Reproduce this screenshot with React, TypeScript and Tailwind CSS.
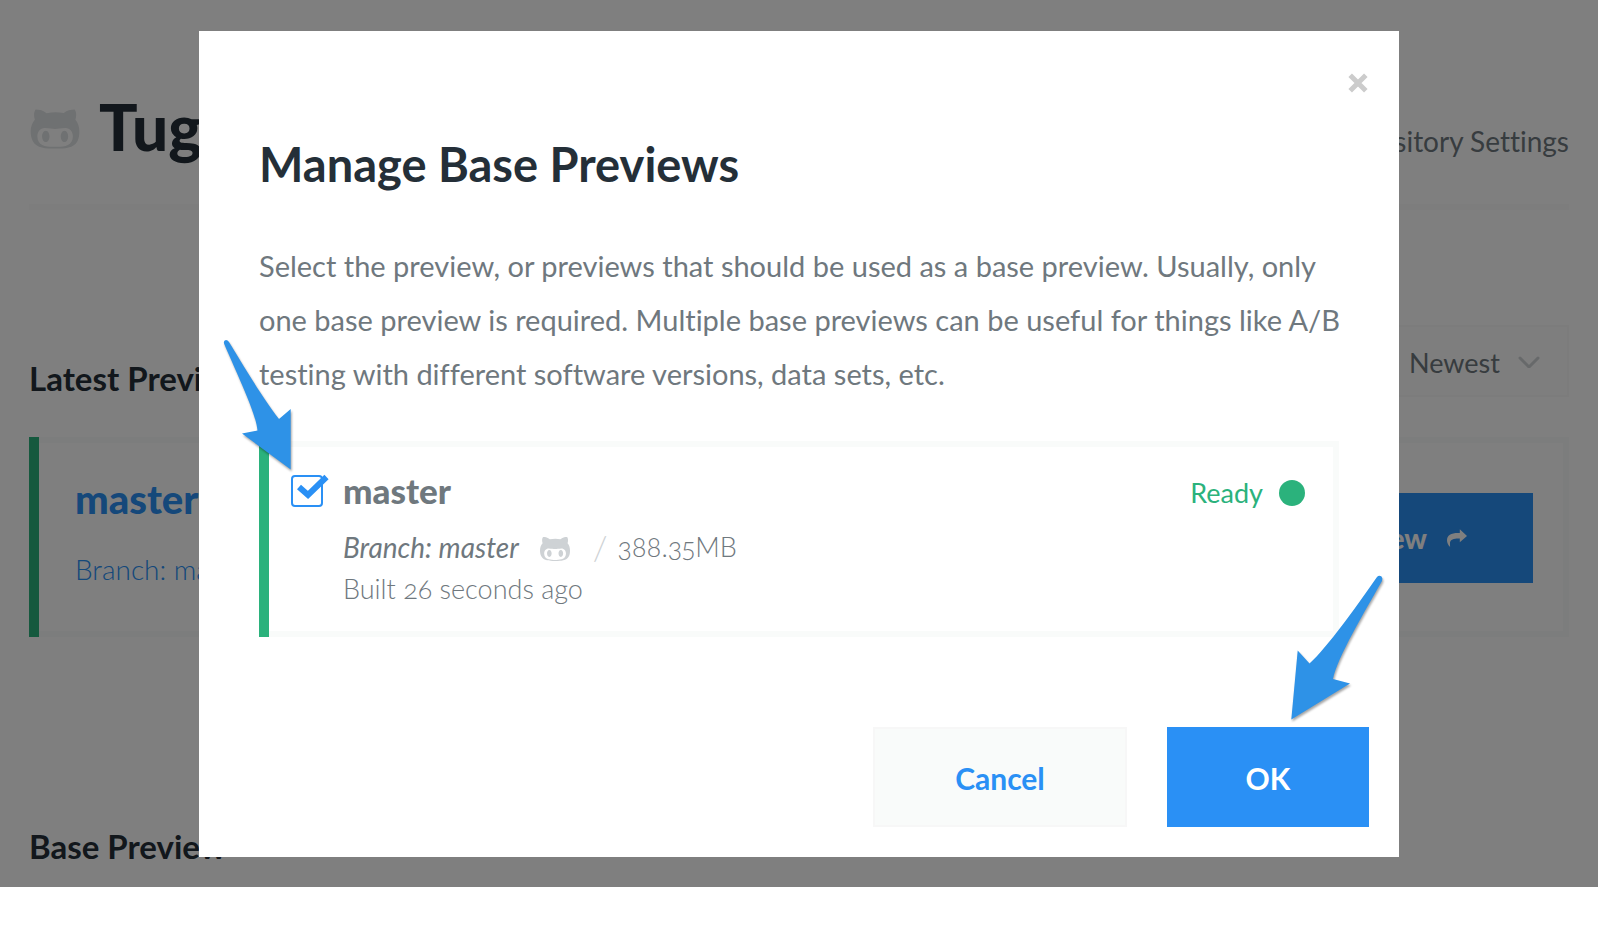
import type { ReactNode } from "react";
import { FaGithubAlt } from "react-icons/fa";

function Card({ className, children }: { className: string; children: ReactNode }) {
  return (
    <section className={`border-l-10 border-[#2bb27c] ${className}`}>
      <div className="border-6 border-l-0 border-[#f9fbfa]">{children}</div>
    </section>
  );
}

function CloseIcon() {
  return (
    <svg viewBox="0 0 20 20" className="size-5" fill="none" stroke="#cccccc" strokeWidth="5" aria-hidden="true">
      <path d="M2.2 2.2 17.8 17.8M17.8 2.2 2.2 17.8" />
    </svg>
  );
}

function ShareIcon() {
  return (
    <svg viewBox="0 0 20 18" className="h-[18px] w-5" fill="#ffffff" aria-hidden="true">
      <path d="M12.8 0.3 20 7 12.8 13.2V9.4C7 9.2 3.4 10.4 3 13.6 2.9 15.2 3.1 16.6 3.1 17.9 1 16 0 13.4 0 11.2 0 6 4.6 3.6 12.8 4Z" />
    </svg>
  );
}

function ChevronIcon() {
  return (
    <svg
      viewBox="0 0 22 14"
      className="pointer-events-none absolute top-1/2 right-[29px] h-3.5 w-[22px] -translate-y-1/2"
      fill="none"
      stroke="#ced2d5"
      strokeWidth="3"
      strokeLinecap="round"
      strokeLinejoin="round"
      aria-hidden="true"
    >
      <path d="M2 4 11 13 20 4" />
    </svg>
  );
}

function Page() {
  return (
    <div className="px-[29px] pb-[19px]">
      <header className="flex items-end justify-between border-b-6 border-[#fafbfb] pt-[85px] pb-[35px]">
        <div className="flex items-center gap-[18px]">
          <FaGithubAlt className="mt-1 size-[52px] text-[#dfe2e4]" aria-hidden="true" />
          <h1 className="text-[64px] leading-[84px] font-black">Tugboat</h1>
        </div>
        <a href="#settings" className="pb-[7px] text-[28px] leading-[42px] text-[#6f787e]">
          Repository Settings
        </a>
      </header>

      <div className="mt-[115px] flex items-end justify-between">
        <h2 className="text-[33px] leading-[38px] font-bold">Latest Previews</h2>
        <div className="relative">
          <label htmlFor="sort" className="sr-only">
            Sort previews
          </label>
          <select
            id="sort"
            className="h-[72px] w-[200px] appearance-none border-2 border-[#f9f9f9] bg-[#fdfdfd] pt-1 pl-[38px] text-[27px] text-[#6f787e]"
          >
            <option>Newest</option>
          </select>
          <ChevronIcon />
        </div>
      </div>

      <Card className="mt-10">
        <div className="flex items-center justify-between pt-[34px] pr-[30px] pb-8 pl-9">
          <div className="pb-2">
            <h3 className="text-[40px] leading-[44px] font-black text-[#2a90f5]">master</h3>
            <p className="mt-[26px] text-[28px] leading-[44px] font-light text-[#2a90f5]">Branch: master</p>
          </div>
          <button className="flex h-[90px] items-center gap-5 bg-[#2a90f5] pr-[66px] pl-16 text-[28px] font-black text-white">
            Preview
            <ShareIcon />
          </button>
        </div>
      </Card>

      <h2 className="mt-[187px] text-[33px] leading-[44px] font-bold">Base Preview</h2>
    </div>
  );
}

function Arrows() {
  return (
    <svg
      viewBox="0 0 1200 826"
      className="pointer-events-none absolute top-0 left-0 h-[826px] w-[1200px] overflow-visible drop-shadow-[1px_2px_1px_rgba(0,0,0,0.35)]"
      fill="#2e92e7"
      aria-hidden="true"
    >
      <path d="M25.2 313Q24 309.5 27 309Q28.7 309 30 311C47 339 65 369 80 388L91.7 378V438.5L43 402.5L58.5 399.5C57 382 38 343 25.2 313Z" />
      <path d="M1178 546Q1180 544 1182.5 545.5Q1184 547 1183 550C1166 580 1138 627 1134 648L1151 652.5L1092.3 688.5L1098.7 619.5L1110.5 632.5C1128 617 1160 572 1178 546Z" />
    </svg>
  );
}

function Dialog() {
  return (
    <div
      role="dialog"
      aria-modal="true"
      aria-labelledby="dialog-title"
      className="relative w-full max-w-[1200px] bg-white pt-[41px] pb-[30px]"
    >
      <div className="flex justify-end px-[30px]">
        <button aria-label="Close" className="flex size-[22px] items-center justify-center">
          <CloseIcon />
        </button>
      </div>

      <div className="px-[60px] pt-10">
        <h2 id="dialog-title" className="text-[47px] leading-[60px] font-bold">
          Manage Base Previews
        </h2>
        <p className="-mr-4 mt-[45px] text-[29px] leading-[54px] text-[#6f787e]">
          Select the preview, or previews that should be used as a base preview. Usually, only one base preview is
          required. Multiple base previews can be useful for things like A/B testing with different software versions,
          data sets, etc.
        </p>

        <Card className="mt-10">
          <div className="flex justify-between py-[21px] pr-[28px] pl-[22px] text-[#6f787e]">
            <div className="flex gap-5">
              <span className="relative mt-[7px] h-8">
                <input
                  id="master"
                  type="checkbox"
                  defaultChecked
                  className="block size-8 appearance-none rounded border-2 border-[#2a90f5] bg-white"
                />
                <svg
                  viewBox="0 0 40 32"
                  className="pointer-events-none absolute top-0 left-0 h-8 w-10 overflow-visible"
                  fill="none"
                  stroke="#2a90f5"
                  strokeWidth="6"
                  aria-hidden="true"
                >
                  <path d="M8 12 17 20 35.5 2" />
                </svg>
              </span>
              <div>
                <label htmlFor="master" className="block text-[35px] leading-[44px] font-black">
                  master
                </label>
                <p className="mt-3.5 flex items-center text-[28px] leading-[42px] font-light">
                  <em className="font-normal">Branch: master</em>
                  <FaGithubAlt className="mt-1 ml-5 size-[32px] text-[#ced2d5]" aria-hidden="true" />
                  <span className="mr-2.5 ml-[22px] text-[34px] text-[#ced2d5]">/</span>
                  <span className="text-[27px] oldstyle-nums proportional-nums">388.35MB</span>
                </p>
                <p className="text-[27px] leading-[42px] font-light oldstyle-nums proportional-nums">
                  Built 26 seconds ago
                </p>
              </div>
            </div>
            <p className="flex h-[50px] items-center gap-4 text-[27px] text-[#2bb27c]">
              Ready
              <span className="size-[26px] rounded-full bg-[#2bb27c]" />
            </p>
          </div>
        </Card>
      </div>

      <div className="mt-[90px] flex justify-end gap-10 px-[30px]">
        <button className="h-[100px] w-[254px] border-2 border-[#f7f7f7] bg-[#f9fbfa] pt-0.5 text-[30px] font-bold text-[#2a90f5]">
          Cancel
        </button>
        <button className="h-[100px] w-[202px] bg-[#2a90f5] pt-0.5 text-[30px] font-bold text-white">OK</button>
      </div>

      <Arrows />
    </div>
  );
}

export default function App() {
  return (
    <main className="relative overflow-hidden bg-white font-['Lato','Open_Sans',sans-serif] text-[#242f38] [font-variant-ligatures:none]">
      <Page />
      <div className="absolute inset-0 flex items-start justify-center bg-black/50 pt-[31px]">
        <Dialog />
      </div>
    </main>
  );
}
